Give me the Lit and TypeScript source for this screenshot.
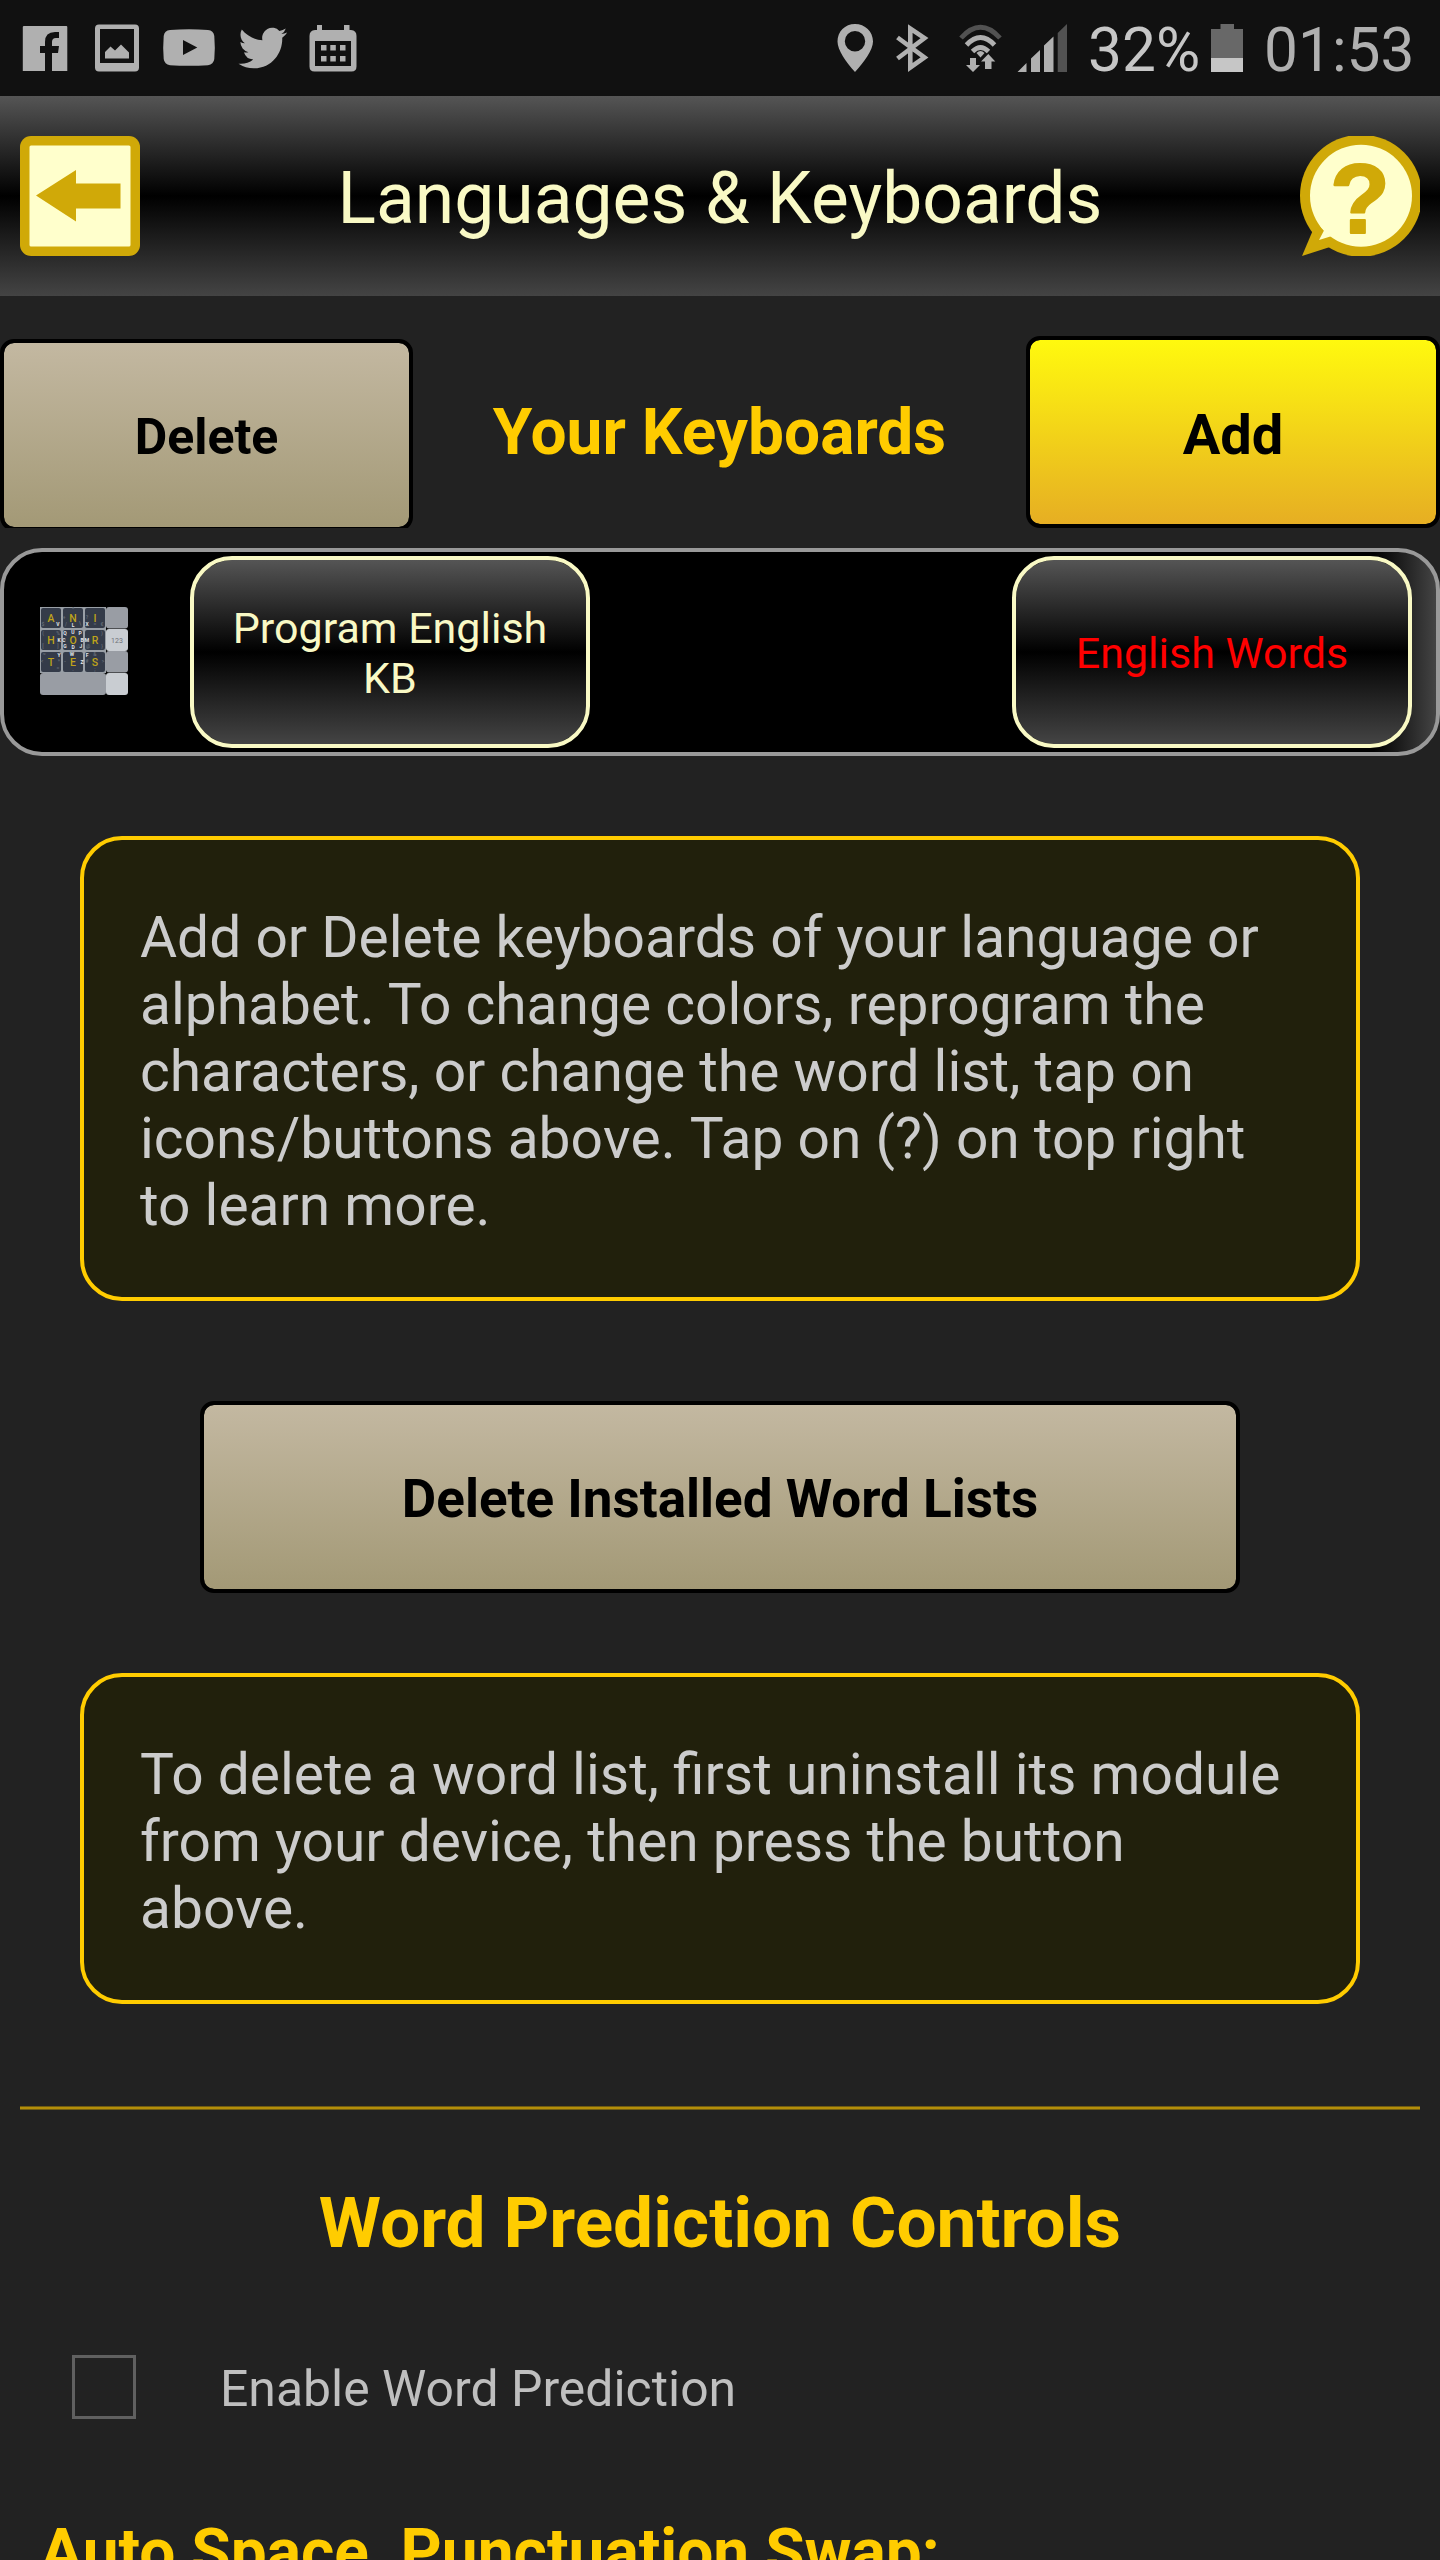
import { LitElement, html, css, svg } from "lit";
import { customElement, property } from "lit/decorators.js";

interface Key {
  x: number;
  y: number;
  main: string;
  hints: [number, number, string, boolean][];
}

// Letter keys of the keyboard thumbnail: main letter plus small corner letters.
const KEYS: Key[] = [
  { x: 0, y: 0, main: "A", hints: [[3, 19, "$", false], [18, 19, "V", true]] },
  { x: 22, y: 0, main: "N", hints: [[11, 4, "^", false], [2, 12, "+", false], [4, 19, "/", false], [11, 20, "L", true], [18, 18, "\\", false]] },
  { x: 44, y: 0, main: "I", hints: [[3, 12, "?", false], [3, 19, "X", true], [11, 19, "=", false], [18, 19, "€", false]] },
  { x: 0, y: 22, main: "H", hints: [[3, 6, "(", false], [18, 6, "%", false], [19, 13, "K", true], [3, 19, "[", false], [18, 19, "]", false]] },
  { x: 22, y: 22, main: "O", hints: [[3, 6, "Q", true], [11, 5, "U", true], [18, 6, "P", true], [2, 13, "C", true], [20, 13, "B", true], [3, 19, "G", true], [11, 20, "D", true], [19, 19, "J", true]] },
  { x: 44, y: 22, main: "R", hints: [[3, 13, "M", true], [18, 6, ")", false], [4, 19, "@", false], [18, 19, "}", false]] },
  { x: 0, y: 44, main: "T", hints: [[4, 5, "~", false], [19, 6, "Y", true], [19, 12, "*", false], [18, 19, "=", false], [2, 12, "<", false]] },
  { x: 22, y: 44, main: "E", hints: [[10, 5, "W", true], [20, 13, "Z", true], [3, 12, "-", false], [11, 20, ".", false]] },
  { x: 44, y: 44, main: "S", hints: [[3, 6, "F", true], [11, 5, "&", false], [3, 12, "#", false], [19, 12, ">", false], [11, 20, ";", false]] },
];

@customElement("status-bar")
export class StatusBar extends LitElement {
  static styles = css`
    :host {
      display: flex;
      height: 96px;
      padding: 0 24px 0 14px;
      box-sizing: border-box;
      align-items: center;
      justify-content: space-between;
      background: #111;
      color: #b0b0b0;
      fill: #b0b0b0;
      font: 60.4px/96px Roboto, sans-serif;
      white-space: nowrap;
    }
    .group {
      display: flex;
      align-items: center;
    }
    svg {
      display: block;
      height: 48px;
    }
    .dim {
      fill: #525252;
    }
    .label {
      padding-top: 5px;
      height: 91px;
      line-height: 91px;
      box-sizing: content-box;
    }
    .percent {
      width: 123px;
      padding-left: 11px;
      color: #c6c6c6;
    }
    .clock {
      width: 152px;
      padding-left: 1px;
    }
  `;

  render() {
    return html`
      <div class="group">
        <svg width="68" viewBox="14 24 68 48">
          <path d="M24 26H66.3Q67.3 26 67.3 27V71H52V53H58L59 46H52V42Q52 38 56 38H59V32H55Q45 32 45 42V46H40V53H45V71H22.8V27Q22.8 26 24 26Z" />
        </svg>
        <svg width="69" viewBox="82 24 69 48">
          <path fill-rule="evenodd" d="M99 24.5H135Q139 24.5 139 28.5V67.500Q139 71.500 135 71.500H99Q95 71.500 95 67.500V28.500Q95 24.500 99 24.500ZM100 29V63H134V29Z" />
          <path d="M105 58.500V52L110.500 46.500L115 50.500L121 44.500L129 52.500V58.500Z" />
        </svg>
        <svg width="76" viewBox="151 24 76 48">
          <path fill-rule="evenodd" d="M170 30Q189 28.500 208 30Q213.500 30.500 214.300 36Q215.300 47.500 214.300 59Q213.500 64.500 208 65.200Q189 66.500 170 65.200Q164.500 64.500 163.700 59Q162.700 47.500 163.700 36Q164.500 30.500 170 30ZM183 40V55L197.300 47.500Z" />
        </svg>
        <svg width="71" viewBox="227 24 71 48">
          <path transform="translate(238.500 23) scale(2.030 2.080)" d="M23.953 4.570a10 10 0 01-2.825.775 4.958 4.958 0 002.163-2.723c-.951.555-2.005.959-3.127 1.184a4.920 4.920 0 00-8.384 4.482C7.690 8.095 4.067 6.130 1.640 3.162a4.822 4.822 0 00-.666 2.475c0 1.710.870 3.213 2.188 4.096a4.904 4.904 0 01-2.228-.616v.060a4.923 4.923 0 003.946 4.827 4.996 4.996 0 01-2.212.085 4.936 4.936 0 004.604 3.417 9.867 9.867 0 01-6.102 2.105c-.390 0-.779-.023-1.170-.067a13.995 13.995 0 007.557 2.209c9.053 0 13.998-7.496 13.998-13.985 0-.210 0-.420-.015-.630A9.935 9.935 0 0024 4.590z" />
        </svg>
        <svg width="70" viewBox="298 24 70 48">
          <path fill-rule="evenodd" d="M317 25H322V30H344V25H349.500V30H351Q356.500 30.500 356.500 36V66.500Q356.500 71.500 351.500 71.500H314.500Q309.500 71.500 309.500 66.500V36Q309.500 30.500 315 30H317ZM315 41V66H351V41Z" />
          <path d="M321 45h5.500v5.500h-5.500zM330.300 45h5.500v5.500h-5.500zM340 45h5.500v5.500h-5.500zM321 56h5.500v5.500h-5.500zM330.300 56h5.500v5.500h-5.500zM340 56h5.500v5.500h-5.500z" />
        </svg>
      </div>
      <div class="group">
        <svg width="59" viewBox="826 24 59 48">
          <path fill-rule="evenodd" d="M856 24C866 24 874 31.500 874 41.500C874 50 865 62 856 72C847 62 838.500 50 838.500 41.500C838.500 31.500 846 24 856 24ZM856 31A10.200 10.200 0 1 0 856 51.400A10.200 10.200 0 1 0 856 31Z" />
        </svg>
        <svg width="59" viewBox="885 24 59 48">
          <path fill="none" stroke="#b0b0b0" stroke-width="4.600" stroke-linejoin="miter" d="M898.500 37.500L925.500 57.500L911.300 67.500V28.500L925.500 38L898.500 58.500" />
        </svg>
        <svg width="67" viewBox="944 24 67 48">
          <g fill="none" stroke="#b0b0b0" stroke-width="4.800">
            <path stroke="#525252" d="M962 38Q981.500 16.500 1001 38" />
            <path d="M967.500 45Q981.500 30 995.500 45" />
            <path d="M973.500 51.500Q981.500 43.500 989.500 51.500" />
          </g>
          <path d="M977.500 53Q981.500 49 985.500 53L981.500 57.500Z" />
          <path d="M971 58H977V65H981L974 72L967 65H971ZM986 69V61.500H982L989.300 54L996.300 61.500H992.500V69Z" />
        </svg>
        <svg width="67" viewBox="1011 24 67 48">
          <path d="M1018.500 72L1027.500 63V72ZM1032 72V58.500L1041 50V72ZM1045 72V45.500L1054.500 36.500V72Z" />
          <path class="dim" d="M1058.700 72V33L1068 24V72Z" />
        </svg>
        <span class="label percent">32%</span>
        <svg width="52" viewBox="1212 24 52 48">
          <path fill="#686868" d="M1221.500 24H1235V29H1244V58H1212V29H1221.500Z" />
          <path fill="#c6c6c6" d="M1212 58H1244V72H1212Z" />
        </svg>
        <span class="label clock">01:53</span>
      </div>
    `;
  }
}

@customElement("app-header")
export class AppHeader extends LitElement {
  @property() heading = "";

  static styles = css`
    :host {
      display: flex;
      height: 200px;
      padding: 0 20px;
      box-sizing: border-box;
      align-items: center;
      justify-content: space-between;
      background: linear-gradient(#555, #000 50%, #444);
      font-family: Roboto, sans-serif;
    }
    svg {
      display: block;
      width: 120px;
      height: 120px;
      overflow: hidden;
    }
    h1 {
      margin: 0;
      padding-top: 5px;
      font-size: 71.4px;
      line-height: 84px;
      font-weight: 400;
      color: #f9f9c5;
    }
    .mark {
      font: bold 98px "Liberation Sans", sans-serif;
      stroke: #d0a908;
      stroke-width: 2.2px;
      stroke-linejoin: round;
    }
  `;

  render() {
    return html`
      <svg viewBox="0 0 120 120">
        <rect width="120" height="120" rx="11" fill="#d0a908" />
        <rect x="9.500" y="9.500" width="101" height="101" rx="1.500" fill="#ffffcc" />
        <path fill="#d0a908" d="M16 59.500L56 34V47.500H100.500V72.500H56V85.500Z" />
      </svg>
      <h1>${this.heading}</h1>
      <svg viewBox="0 0 120 120">
        <path fill="#d0a908" d="M13 94L2 120L30 111Z" />
        <circle cx="61" cy="59.700" r="61" fill="#d0a908" />
        <circle cx="61" cy="59.700" r="51" fill="#ffffcc" />
        <path fill="#ffffcc" d="M20 90L24 94.500L19 104L32 100L37 96Z" />
        <text class="mark" x="60" y="97" text-anchor="middle" fill="#d0a908">?</text>
      </svg>
    `;
  }
}

@customElement("keyboard-thumbnail")
export class KeyboardThumbnail extends LitElement {
  static styles = css`
    :host {
      display: block;
    }
    svg {
      display: block;
      width: 88px;
      height: 88px;
      font-family: Roboto, sans-serif;
      text-anchor: middle;
    }
    .main {
      font-size: 10.5px;
      font-weight: 500;
      fill: #bfa31a;
    }
    .hint {
      font-size: 5px;
      font-weight: 700;
      fill: #626a74;
    }
    .bright {
      fill: #e4e6ea;
    }
    .digits {
      font-size: 7px;
      fill: #6d7178;
    }
  `;

  render() {
    return html`
      <svg viewBox="0 0 88 88">
        <rect width="66" height="66" fill="#999fa6" />
        ${KEYS.map(
          (k) => svg`
            <rect x=${k.x + 1} y=${k.y + 1} width="20" height="20" rx="2" fill="#343b49" />
            ${k.hints.map(
              ([x, y, t, bright]) => svg`<text class="hint ${bright ? "bright" : ""}" x=${k.x + x} y=${k.y + y}>${t}</text>`,
            )}
            <text class="main" x=${k.x + 11} y=${k.y + 14.700}>${k.main}</text>
          `,
        )}
        <rect x="66" width="22" height="21.500" rx="3" fill="#999da4" />
        <rect x="66" y="22" width="22" height="22" rx="3" fill="#c9cdd2" />
        <rect x="66" y="44" width="22" height="21.500" rx="3" fill="#999da4" />
        <rect y="66" width="66" height="22" rx="3" fill="#999da4" />
        <rect x="66" y="66" width="22" height="22" rx="3" fill="#c9cdd2" />
        <text class="digits" x="77" y="36">123</text>
      </svg>
    `;
  }
}

@customElement("app-root")
export class AppRoot extends LitElement {
  static styles = css`
    :host {
      display: block;
      height: 2560px;
      overflow: hidden;
      background: #222;
      color: #ccc;
      font-family: Roboto, sans-serif;
    }
    * {
      box-sizing: border-box;
    }
    button {
      display: block;
      margin: 0;
      font-family: inherit;
    }
    h2,
    h3,
    p {
      margin: 0;
    }
    h2,
    h3 {
      color: #fc0;
      font-weight: 700;
      text-align: center;
      white-space: nowrap;
    }
    .toolbar {
      display: grid;
      grid-template-columns: 413px 1fr 414px;
      align-items: start;
      height: 232px;
      overflow: hidden;
    }
    .toolbar h2 {
      margin-top: 105px;
      font-size: 64px;
      line-height: 64px;
    }
    .action {
      width: 100%;
      height: 192px;
      border: 4px solid #000;
      border-radius: 14px;
      font-weight: 700;
      color: #000;
    }
    .tan {
      background: linear-gradient(#c3b8a1, #a39976) padding-box;
    }
    .gold {
      margin-top: 40px;
      padding: 5px 0 0;
      font-size: 56px;
      background: linear-gradient(#fff90e, #e6ae23) padding-box;
    }
    .delete {
      margin-top: 43px;
      padding: 4px 0 0;
      font-size: 50px;
    }
    .keyboard {
      display: flex;
      align-items: center;
      height: 208px;
      margin-top: 20px;
      padding: 0 24px 0 36px;
      border: 4px solid #999;
      border-radius: 42px;
      background: linear-gradient(90deg, #000 calc(100% - 62px), #444);
    }
    keyboard-thumbnail {
      margin-bottom: 2px;
    }
    .pill {
      width: 400px;
      height: 192px;
      padding: 2px 30px 0;
      border: 4px solid #f9f9c5;
      border-radius: 42px;
      background: linear-gradient(#555, #000 50%, #444) padding-box;
      color: #f9f9c5;
      font-size: 43px;
      line-height: 50px;
    }
    .program {
      margin-left: 62px;
    }
    .words {
      margin-left: auto;
      color: #f00;
    }
    .note {
      margin: 80px 80px 0;
      padding: 64px 52px 58px 56px;
      border: 4px solid #fc0;
      border-radius: 42px;
      background: #21200c;
      font-size: 56.9px;
      line-height: 67px;
      white-space: pre-line;
    }
    .loose {
      font-kerning: none;
    }
    .lists {
      width: 1040px;
      margin: 100px auto 0;
      padding: 4px 0 0;
      font-size: 53px;
    }
    .divider {
      height: 4px;
      margin: 102px 20px 0;
      border: solid #6f5b12;
      border-width: 1px 0;
      background: #b38e0a;
    }
    .section {
      margin-top: 71px;
      font-size: 71.2px;
      line-height: 84px;
    }
    .check {
      display: flex;
      align-items: center;
      height: 64px;
      margin: 90px 72px 0;
      font-size: 49.9px;
      color: #bfbfbf;
    }
    .box {
      width: 64px;
      height: 64px;
      margin-right: 84px;
      border: 3px solid #606060;
    }
    .check span:last-child {
      padding-top: 3px;
    }
    .sub {
      margin: 96px 0 0 40px;
      font-size: 64px;
      line-height: 76px;
      text-align: left;
    }
  `;

  render() {
    return html`
      <status-bar></status-bar>
      <app-header heading="Languages &amp; Keyboards"></app-header>
      <div class="toolbar">
        <button class="action tan delete">Delete</button>
        <h2>Your Keyboards</h2>
        <button class="action gold">Add</button>
      </div>
      <div class="keyboard">
        <keyboard-thumbnail></keyboard-thumbnail>
        <button class="pill program">Program English KB</button>
        <button class="pill words">English Words</button>
      </div>
      <p class="note">${"Add or Delete keyboards of your language or\nalphabet. To change colors, reprogram the\ncharacters, or change the word list, tap on\nicons/buttons "}<span class="loose">above. </span>${"Tap on (?) on top right\nto learn more."}</p>
      <button class="action tan lists">Delete Installed Word Lists</button>
      <p class="note">${"To delete a word list, first uninstall its module\nfrom your device, then press the button\n"}<span class="loose">above.</span></p>
      <div class="divider"></div>
      <h2 class="section">Word Prediction Controls</h2>
      <div class="check"><span class="box"></span><span>Enable Word Prediction</span></div>
      <h3 class="sub">Auto Space, Punctuation Swap:</h3>
    `;
  }
}
